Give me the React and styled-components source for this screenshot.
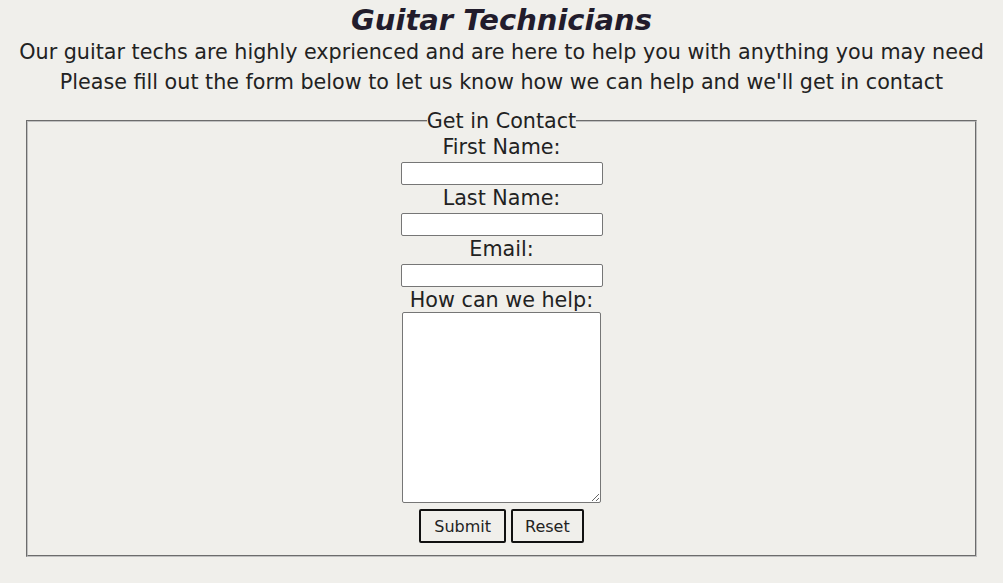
import React from 'react';
import styled, { createGlobalStyle } from 'styled-components';

const GlobalStyle = createGlobalStyle`
  html, body {
    margin: 0;
    padding: 0;
    background: #f0efeb;
  }
  body {
    font-family: "DejaVu Sans", "Open Sans", sans-serif;
    color: #222;
  }
`;

const Page = styled.main`
  display: flex;
  flex-direction: column;
  align-items: stretch;
  padding: 0 26px;
`;

const Title = styled.h1`
  margin: 0;
  padding-top: 3px;
  font-size: 29px;
  line-height: 34px;
  font-style: italic;
  font-weight: 600;
  color: #221c2c;
  text-align: center;
`;

const Intro = styled.p`
  margin: 0 -26px;
  font-size: 20.7px;
  line-height: 30px;
  text-align: center;
`;

const Fieldset = styled.fieldset`
  margin: 12px 0 0;
  padding: 0 0 12px;
  border: 2px groove #c0c0c0;
  display: flex;
  flex-direction: column;
  align-items: center;
`;

const Legend = styled.legend`
  margin: 0 auto;
  padding: 0;
  font-size: 20.7px;
  line-height: 24px;
`;

const Label = styled.label`
  display: block;
  font-size: 20.7px;
  line-height: 24px;
  margin-top: ${({ $first }) => ($first ? 2 : 1)}px;
`;

const Input = styled.input`
  box-sizing: border-box;
  width: 202px;
  height: 23px;
  margin-top: 3px;
  border: 1px solid #767676;
  border-radius: 2px;
  background: #fff;
  font: inherit;
  font-size: 14px;
`;

const TextArea = styled.textarea`
  box-sizing: border-box;
  width: 199px;
  height: 191px;
  margin: 0;
  border: 1px solid #767676;
  border-radius: 2px;
  background: #fff;
  font-size: 14px;
`;

const Buttons = styled.div`
  display: flex;
  gap: 5px;
  margin-top: 6px;
`;

const Button = styled.button`
  box-sizing: border-box;
  height: 34px;
  padding: 0 ${({ $wide }) => ($wide ? 13 : 12)}px;
  background: transparent;
  border: 2px solid #111;
  border-radius: 2px;
  font-family: inherit;
  font-size: 16px;
  color: #222;
`;

export default function App() {
  return (
    <>
      <GlobalStyle />
      <Page>
        <Title>Guitar Technicians</Title>
        <Intro>
          Our guitar techs are highly exprienced and are here to help you with anything you may need
          <br />
          Please fill out the form below to let us know how we can help and we'll get in contact
        </Intro>
        <form onSubmit={(e) => e.preventDefault()}>
          <Fieldset>
            <Legend>Get in Contact</Legend>
            <Label $first htmlFor="fname">First Name:</Label>
            <Input id="fname" type="text" />
            <Label htmlFor="lname">Last Name:</Label>
            <Input id="lname" type="text" />
            <Label htmlFor="email">Email:</Label>
            <Input id="email" type="email" />
            <Label htmlFor="help">How can we help:</Label>
            <TextArea id="help" />
            <Buttons>
              <Button $wide type="submit">Submit</Button>
              <Button type="reset">Reset</Button>
            </Buttons>
          </Fieldset>
        </form>
      </Page>
    </>
  );
}
